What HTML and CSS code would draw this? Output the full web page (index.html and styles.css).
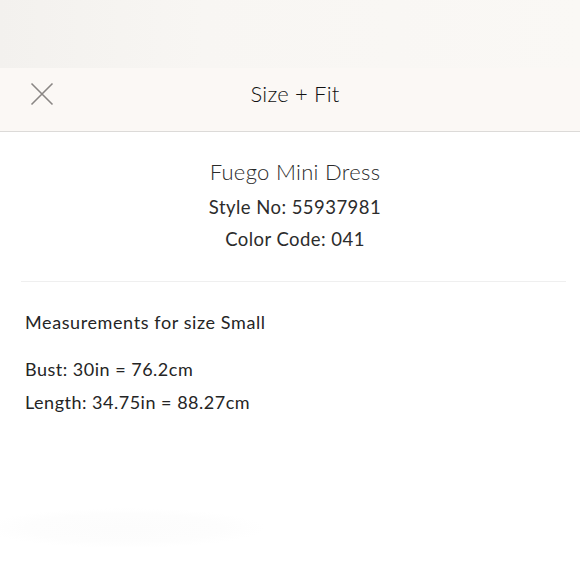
FILE: index.html
```html
<!DOCTYPE html>
<html>
<head>
<meta charset="utf-8">
<link rel="stylesheet" href="styles.css">
</head>
<body>
<div class="top"></div>
<header class="header">
  <div class="close">
    <svg width="24" height="24" viewBox="0 0 24 24"><path d="M1.5 1.5 L22.5 22.5 M22.5 1.5 L1.5 22.5" stroke="#8a8684" stroke-width="1.6" fill="none"/></svg>
  </div>
  <div class="title">Size + Fit</div>
  <div></div>
</header>
<main class="content">
  <section class="product">
    <div class="name">Fuego Mini Dress</div>
    <div class="meta">Style No: 55937981</div>
    <div class="meta">Color Code: 041</div>
  </section>
  <hr class="divider">
  <section class="measure">
    <div class="heading">Measurements for size Small</div>
    <div class="row">Bust: 30in = 76.2cm</div>
    <div class="row">Length: 34.75in = 88.27cm</div>
  </section>
</main>
</body>
</html>
```
FILE: styles.css
```css
html, body {
  margin: 0;
  padding: 0;
  font-family: Lato, "Noto Sans", sans-serif;
  color: #252525;
}
body {
  min-height: 580px;
  background:
    radial-gradient(ellipse 140px 20px at 125px 528px, #fcfcfc 0%, #fdfdfd 70%, rgba(255,255,255,0) 100%),
    #ffffff;
}
.top {
  height: 68px;
  background: linear-gradient(90deg, #f3f1ee 0%, #f8f6f3 35%, #faf8f5 100%);
}
.header {
  height: 64px;
  box-sizing: border-box;
  padding-bottom: 12px;
  background: #fbf8f5;
  border-bottom: 1px solid #dcdad8;
  display: grid;
  grid-template-columns: 1fr auto 1fr;
  align-items: center;
}
.close {
  padding-left: 30px;
  display: flex;
  align-items: center;
}
.title {
  font-size: 22px;
  font-weight: 300;
  color: #111;
  padding-left: 10px;
  letter-spacing: 0.2px;
}
.product {
  text-align: center;
  padding-top: 26px;
  padding-left: 10px;
}
.name {
  font-size: 22px;
  font-weight: 300;
  line-height: 28px;
  color: #2a2a2a;
  letter-spacing: 0.3px;
}
.meta {
  font-size: 18.5px;
  line-height: 32px;
  letter-spacing: 0.45px;
  color: #2c2c2c;
}
.name + .meta {
  margin-top: 5px;
}
.divider {
  border: 0;
  border-top: 1px solid #efefef;
  margin: 26px 14px 0 21px;
}
.measure {
  padding: 28px 25px 0;
}
.heading {
  font-size: 18px;
  line-height: 24px;
  letter-spacing: 0.6px;
}
.row {
  font-size: 18px;
  line-height: 33px;
  letter-spacing: 0.5px;
}
.heading + .row {
  margin-top: 19px;
}
```
